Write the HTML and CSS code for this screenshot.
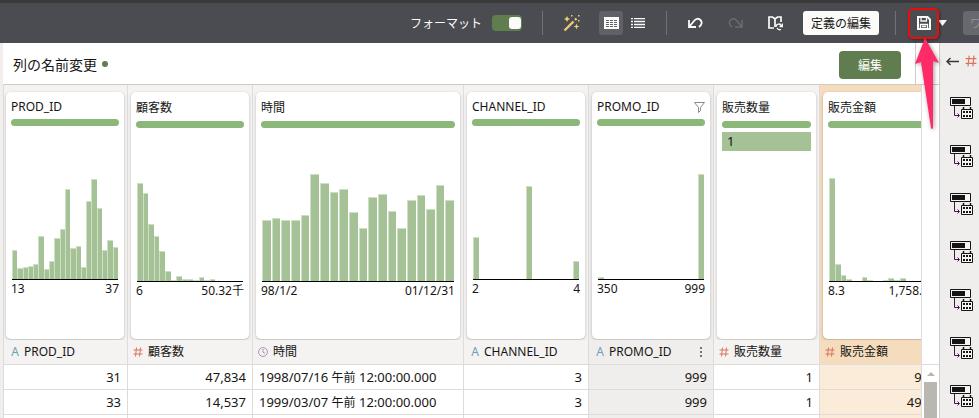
FILE: index.html
```html
<!DOCTYPE html>
<html lang="ja">
  <head>
    <meta charset="UTF-8" />
    <meta name="viewport" content="width=device-width, initial-scale=1.0" />
    <title>列の名前変更</title>
    <link rel="stylesheet" href="styles.css">
  </head>

  <body>
    <!-- shared icons -->
    <svg class="sprite" aria-hidden="true">
      <symbol id="hash" viewBox="0 0 10 10">
        <path d="M3.5 0.5L2.5 9.5M7.5 0.5L6.5 9.5M0.5 3H9.5M0.5 7H9.5" fill="none" stroke="currentColor" />
      </symbol>
      <symbol id="clock" viewBox="0 0 10 10">
        <circle cx="5" cy="5" r="4.4" fill="none" stroke="currentColor" />
        <path d="M5 2V5.2L7 6.4" fill="none" stroke="currentColor" />
      </symbol>
      <symbol id="step" viewBox="0 0 24 24">
        <path d="M0.5 0.5H20.5V8.5H0.5Z" fill="#f7f5f4" stroke="#161513" />
        <path d="M2 2H15V7H2Z" fill="#161513" />
        <path d="M4.5 9V18.5H9M7.5 16.5L9.5 18.5L7.5 20.5" fill="none" stroke="#4a1248" />
        <path d="M11.5 12.5H22.5V21.5H11.5Z" fill="#f7f5f4" stroke="#161513" />
        <path d="M13.5 10V13M20.5 10V13" stroke="#161513" stroke-width="1.5" />
        <path d="M13 14H15V16H13ZM16 14H18V16H16ZM19 14H21V16H19ZM13 18H15V20H13ZM16 18H18V20H16ZM19 18H21V20H19Z" fill="#161513" />
      </symbol>
    </svg>

    <header class="toolbar">
      <label class="format" for="format">フォーマット</label>
      <input type="checkbox" class="toggle" id="format" checked />
      <span class="divider"></span>
      <button class="tool wand" aria-label="自動">
        <svg width="17" height="17" viewBox="0 0 17 17">
          <path d="M1.5 15.5L10.5 6.5M12 5L13.5 3.5" stroke="#f0cc71" stroke-width="2.4" fill="none" />
          <path d="M4 1L5 3L7 4L5 5L4 7L3 5L1 4L3 3ZM13.5 8.5L14.3 10.7L16.5 11.5L14.3 12.3L13.5 14.5L12.7 12.3L10.5 11.5L12.7 10.7ZM8 0H9.5V1.5H8ZM15 0H16.5V1.5H15ZM15 5H16.5V6.5H15Z" fill="#f0cc71" />
        </svg>
      </button>
      <div class="views">
        <button class="tool valgt" aria-label="表">
          <svg width="15" height="12" viewBox="0 0 15 12">
            <path d="M0 0H15V12H0Z" fill="#fcfbfa" />
            <path d="M2 3.5H5M6 3.5H9M10 3.5H13M2 5.5H5M6 5.5H9M10 5.5H13M2 7.5H5M6 7.5H9M10 7.5H13M2 9.5H5M6 9.5H9M10 9.5H13" stroke="#5f6166" />
          </svg>
        </button>
        <button class="tool" aria-label="リスト">
          <svg width="14" height="10" viewBox="0 0 14 10">
            <path d="M0 0.5H2M3 0.5H14M0 3.5H2M3 3.5H14M0 6.5H2M3 6.5H14M0 9.5H2M3 9.5H14" stroke="#fcfbfa" stroke-width="1.6" />
          </svg>
        </button>
      </div>
      <span class="divider"></span>
      <button class="tool" aria-label="元に戻す">
        <svg width="15" height="12" viewBox="0 0 15 12">
          <path d="M1 3V10H8M1.5 9.5L6 4C8 1.5 10.5 1 12.5 3C14.5 5 14 7.5 11 10" fill="none" stroke="#fcfbfa" stroke-width="1.8" />
        </svg>
      </button>
      <button class="tool" aria-label="やり直し" disabled>
        <svg width="15" height="12" viewBox="0 0 15 12">
          <path d="M14 3V10H7M13.5 9.5L9 4C7 1.5 4.5 1 2.5 3C0.5 5 1 7.5 4 10" fill="none" stroke="#696b70" stroke-width="1.5" />
        </svg>
      </button>
      <button class="tool" aria-label="リフレッシュ">
        <svg width="15" height="15" viewBox="0 0 15 15">
          <path d="M6 12H1V1H4.5L7 3L9.5 1H13V6M7 3V11" fill="none" stroke="#fcfbfa" stroke-width="1.7" />
          <path d="M8 11C8 7.5 12.5 7 13.5 10M14.5 7.5V10.5H11.5M9 12C10 14 11.5 14 13 13.5" fill="none" stroke="#fcfbfa" stroke-width="1.3" />
        </svg>
      </button>
      <button class="define">定義の編集</button>
      <span class="divider"></span>
      <div class="save">
        <button class="tool" aria-label="保存">
          <svg width="14" height="14" viewBox="0 0 14 14">
            <path d="M1 1H10.5L13 3.5V13H1Z" fill="none" stroke="#fcfbfa" stroke-width="2" />
            <path d="M4 1V5H9.5V1M3.5 13V8.5H10.5V13M5 10.5H9" fill="none" stroke="#fcfbfa" stroke-width="1.3" />
          </svg>
        </button>
        <button class="more" aria-label="保存メニュー">
          <svg width="9" height="6" viewBox="0 0 9 6"><path d="M0 0H9L4.5 6Z" fill="#fcfbfa" /></svg>
        </button>
        <span class="frame"></span>
        <svg class="pointer" width="30" height="96" viewBox="0 0 30 96">
          <path d="M13 1L3 27L9 25L19 91Q20 93 21 91L21 24L27 26Z" fill="#ff2b68" />
        </svg>
      </div>
      <button class="workbook" disabled>ワークブックの作成</button>
    </header>

    <main>
      <div class="edge"></div>
      <section class="content">
        <div class="step_header">
          <h1>列の名前変更<span class="dot"></span></h1>
          <button class="edit">編集</button>
          <span class="step_end"></span>
        </div>
        <div class="sheet">
          <div class="clip">
            <table>
              <colgroup>
                <col class="col" /><col class="col" /><col class="col_time" /><col class="col" />
                <col class="col" /><col class="col_small" /><col class="col" />
              </colgroup>
              <thead>
                <tr class="cards">
                  <td>
                    <article class="card">
                      <h2>PROD_ID</h2>
                      <div class="quality"></div>
                      <div class="chart" data-values="29,11,12,13,15,43,10,18,41,50,90,31,33,12,78,100,71,29,39,32"></div>
                      <p class="axis"><span>13</span><span>37</span></p>
                    </article>
                  </td>
                  <td>
                    <article class="card">
                      <h2 class="ja">顧客数</h2>
                      <div class="quality"></div>
                      <div class="chart" data-values="98,88,57,45,30,10,1,5,2,2,1,4,1,2,0,0,0,0,0,0"></div>
                      <p class="axis"><span>6</span><span>50.32千</span></p>
                    </article>
                  </td>
                  <td>
                    <article class="card">
                      <h2 class="ja">時間</h2>
                      <div class="quality"></div>
                      <div class="chart spaced" data-values="61,63,61,61,66,107,98,89,92,69,53,84,87,70,53,81,86,72,96,81"></div>
                      <p class="axis"><span>98/1/2</span><span>01/12/31</span></p>
                    </article>
                  </td>
                  <td>
                    <article class="card">
                      <h2>CHANNEL_ID</h2>
                      <div class="quality"></div>
                      <div class="chart" data-values="42,0,0,0,0,0,0,0,0,0,93,0,0,0,0,0,0,0,0,18"></div>
                      <p class="axis"><span>2</span><span>4</span></p>
                    </article>
                  </td>
                  <td class="hover">
                    <article class="card">
                      <h2>PROMO_ID
                        <svg width="11" height="11" viewBox="0 0 11 11"><path d="M0.5 0.5H10.5L6.5 5.5V8.5L4.5 10.5V5.5Z" fill="none" stroke="#8a8a92" /></svg>
                      </h2>
                      <div class="quality"></div>
                      <div class="chart" data-values="2,0,0,0,0,0,0,0,0,0,0,0,0,0,0,0,0,0,0,105"></div>
                      <p class="axis"><span>350</span><span>999</span></p>
                    </article>
                  </td>
                  <td>
                    <article class="card">
                      <h2 class="ja">販売数量</h2>
                      <div class="quality"></div>
                      <p class="value">1</p>
                    </article>
                  </td>
                  <td class="selected">
                    <article class="card">
                      <h2 class="ja">販売金額</h2>
                      <div class="quality"></div>
                      <div class="chart" data-values="103,17,6,2,0,0,4,1,0,0,1,3,1,3,0,0,0,1,0,0"></div>
                      <p class="axis"><span>8.3</span><span>1,758.42</span></p>
                    </article>
                  </td>
                </tr>
                <tr>
                  <th><div class="name"><i class="text">A</i>PROD_ID</div></th>
                  <th><div class="name"><svg class="number"><use href="#hash" /></svg>顧客数</div></th>
                  <th><div class="name"><svg class="time"><use href="#clock" /></svg>時間</div></th>
                  <th><div class="name"><i class="text">A</i>CHANNEL_ID</div></th>
                  <th class="hover">
                    <div class="name"><i class="text">A</i>PROMO_ID
                      <button class="options" aria-label="オプション">
                        <svg width="2" height="10" viewBox="0 0 2 10"><path d="M0 0H2V2H0ZM0 4H2V6H0ZM0 8H2V10H0Z" fill="#77736f" /></svg>
                      </button>
                    </div>
                  </th>
                  <th><div class="name"><svg class="number"><use href="#hash" /></svg>販売数量</div></th>
                  <th class="selected"><div class="name"><svg class="number"><use href="#hash" /></svg>販売金額</div></th>
                </tr>
              </thead>
              <tbody>
                <tr>
                  <td>31</td>
                  <td>47,834</td>
                  <td class="date">1998/07/16 <span>午前</span> 12:00:00.000</td>
                  <td>3</td>
                  <td class="hover">999</td>
                  <td>1</td>
                  <td class="selected">9.86</td>
                </tr>
                <tr>
                  <td>33</td>
                  <td>14,537</td>
                  <td class="date">1999/03/07 <span>午前</span> 12:00:00.000</td>
                  <td>3</td>
                  <td class="hover">999</td>
                  <td>1</td>
                  <td class="selected">49.86</td>
                </tr>
                <tr>
                  <td></td><td></td><td></td><td></td><td class="hover"></td><td></td><td class="selected"></td>
                </tr>
              </tbody>
            </table>
          </div>
          <div class="scroll">
            <div class="scroll_top"></div>
            <svg width="8" height="4" viewBox="0 0 8 4"><path d="M0 4L4 0L8 4Z" fill="#bab6b1" /></svg>
            <div class="thumb"></div>
          </div>
        </div>
      </section>

      <aside class="rail">
        <div class="rail_header">
          <button aria-label="戻る">
            <svg width="13" height="9" viewBox="0 0 13 9"><path d="M13 4.5H1M4.5 1L1 4.5L4.5 8" fill="none" stroke="#3a3632" stroke-width="1.4" /></svg>
          </button>
          <svg class="rail_hash" width="12" height="12"><use href="#hash" /></svg>
        </div>
        <button class="step" aria-label="ステップ 1"><svg width="24" height="24"><use href="#step" /></svg></button>
        <button class="step" aria-label="ステップ 2"><svg width="24" height="24"><use href="#step" /></svg></button>
        <button class="step" aria-label="ステップ 3"><svg width="24" height="24"><use href="#step" /></svg></button>
        <button class="step" aria-label="ステップ 4"><svg width="24" height="24"><use href="#step" /></svg></button>
        <button class="step" aria-label="ステップ 5"><svg width="24" height="24"><use href="#step" /></svg></button>
        <button class="step" aria-label="ステップ 6"><svg width="24" height="24"><use href="#step" /></svg></button>
        <button class="step" aria-label="ステップ 7"><svg width="24" height="24"><use href="#step" /></svg></button>
      </aside>
    </main>

    <script>
      // one bar for each value in data-values
      document.querySelectorAll(".chart").forEach((chart) => {
        chart.dataset.values.split(",").forEach((value) => {
          const bar = document.createElement("span");
          if (value > 0) {
            bar.className = "bar";
            bar.style.height = value + "px";
          }
          chart.appendChild(bar);
        });
      });
    </script>
  </body>
</html>
```
FILE: styles.css
```css
* {
  box-sizing: border-box;
}

body {
  margin: 0;
  height: 100vh;
  display: flex;
  flex-direction: column;
  overflow: hidden;
  background: white;
  color: #161513;
  font-family: "Noto Sans", "Noto Sans CJK JP", sans-serif;
  font-size: 13px;
}

h1,
h2,
p {
  margin: 0;
  font-weight: 400;
}

button {
  font-family: inherit;
  font-size: 12px;
  color: inherit;
  border: none;
  background: none;
  padding: 0;
}

svg {
  display: block;
  flex: none;
}

.sprite {
  position: absolute;
  width: 0;
  height: 0;
}

/* toolbar */
.toolbar {
  display: flex;
  align-items: center;
  justify-content: flex-end;
  gap: 16px;
  height: 43px;
  flex: none;
  border-top: 3px solid #3a3a3a;
  background: #4a4c52;
}

.format {
  color: #fcfbfa;
  font-size: 12px;
  margin-right: -6px;
}

.toggle {
  appearance: none;
  display: flex;
  justify-content: flex-end;
  align-items: center;
  width: 30px;
  height: 16px;
  margin: 0 4px 0 0;
  padding: 0 1px;
  border-radius: 4px;
  background: #5f7d4f;
}

.toggle::before {
  content: "";
  width: 12px;
  height: 12px;
  border-radius: 3px;
  background: #fcfbfa;
}

.divider {
  width: 1px;
  height: 24px;
  background: #6f7176;
}

.tool {
  display: flex;
  align-items: center;
  justify-content: center;
  width: 24px;
  height: 24px;
  border-radius: 3px;
}

.valgt {
  background: #5f6166;
}

.views {
  display: flex;
  gap: 3px;
}

.define {
  width: 76px;
  height: 24px;
  border-radius: 3px;
  background: #fcfbfa;
}

.save {
  position: relative;
  display: flex;
  align-items: center;
  gap: 2px;
}

.frame {
  position: absolute;
  top: -3px;
  left: -4px;
  width: 31px;
  height: 31px;
  border: 2px solid #f00a0a;
  border-radius: 5px;
  box-shadow: 1px 1px 3px rgba(0, 0, 0, 0.4);
}

.pointer {
  position: absolute;
  z-index: 1;
  top: 26px;
  left: 0;
  filter: drop-shadow(1px 1px 2px rgba(0, 0, 0, 0.4));
}

.workbook {
  width: 16px;
  height: 24px;
  padding-left: 7px;
  overflow: hidden;
  text-align: left;
  white-space: nowrap;
  border-radius: 3px 0 0 3px;
  background: #68696e;
  color: #8f9095;
}

/* main area */
main {
  flex: 1;
  display: flex;
  min-height: 0;
}

.edge {
  width: 3px;
  background: #f1efed;
}

.content {
  flex: 1;
  min-width: 0;
  display: flex;
  flex-direction: column;
}

.step_header {
  display: flex;
  align-items: center;
  height: 42px;
  flex: none;
  padding-left: 10px;
  border-bottom: 1px solid #cfccc8;
}

.step_header h1 {
  flex: 1;
  display: flex;
  align-items: center;
  gap: 5px;
  font-size: 14px;
}

.dot {
  width: 6px;
  height: 6px;
  border-radius: 50%;
  background: #5f7d4f;
}

.edit {
  width: 62px;
  height: 28px;
  margin: 3px 14px 0 0;
  border-radius: 4px;
  background: #5f7d4f;
  color: white;
}

.step_end {
  width: 24px;
  align-self: stretch;
  border-left: 1px solid #cfccc8;
}

.sheet {
  flex: 1;
  display: flex;
  min-height: 0;
}

.clip {
  flex: 1;
  min-width: 0;
  overflow: hidden;
  border-right: 1px solid #dedcda;
}

table {
  width: 942px;
  table-layout: fixed;
  border-collapse: separate;
  border-spacing: 0;
}

.col {
  width: 125px;
}

.col_time {
  width: 211px;
}

.col_small {
  width: 106px;
}

th,
td {
  height: 25px;
  padding: 0 6px;
  border-right: 1px solid #dedcda;
  border-bottom: 1px solid #dedcda;
  font-weight: 400;
  line-height: 18px;
  text-align: right;
  white-space: nowrap;
}

th {
  padding: 0 5px;
}

th:first-child,
td:first-child {
  border-left: 1px solid #dedcda;
}

thead th,
thead td {
  background: #f4f3f2;
}

.cards td {
  height: 255px;
  padding: 7px 3px 0;
  border-bottom: none;
  vertical-align: top;
}

.cards td:first-child {
  padding-left: 2px;
}

thead .hover,
.hover {
  background: #efeeec;
}

tbody .selected {
  padding-right: 4px;
  background: #fbecd9;
}

thead .selected {
  background: #f4dcbc;
}

.card {
  height: 247px;
  padding: 6px 5px;
  border-radius: 5px;
  background: white;
  box-shadow: 0 1px 3px rgba(0, 0, 0, 0.25);
  text-align: left;
}

.card h2 {
  display: flex;
  align-items: center;
  justify-content: space-between;
  font-size: 12px;
  line-height: 18px;
  margin-bottom: 3px;
}

.card .ja {
  line-height: 20px;
}

.quality {
  height: 7px;
  border-radius: 4px;
  background: #8bb779;
}

.chart {
  display: flex;
  align-items: flex-end;
  height: 154px;
  margin: 0 1px;
  border-bottom: 1px solid black;
}

.chart span {
  flex: 1;
}

.chart .bar {
  background: #a5c196;
  border: solid #cfdfc6;
  border-width: 1px 0 0 1px;
}

.spaced {
  gap: 1px;
}

.axis {
  display: flex;
  justify-content: space-between;
  font-size: 12px;
  line-height: 18px;
}

.value {
  height: 19px;
  margin-top: 4px;
  padding-left: 5px;
  line-height: 19px;
  background: #a5c196;
}

.name {
  display: flex;
  align-items: center;
  font-size: 12px;
}

.name i,
.name > svg {
  width: 10px;
  height: 10px;
  margin-right: 5px;
}

.name i {
  height: 18px;
  font-style: normal;
}

.text {
  color: #6f9fb5;
}

.number {
  color: #db7360;
}

.time {
  color: #a893b5;
}

.options {
  margin-left: auto;
  padding: 0 6px;
}

.date {
  text-align: left;
}

.date span {
  font-size: 12px;
}

.scroll {
  width: 17px;
  display: flex;
  flex-direction: column;
  align-items: center;
}

.scroll_top {
  width: 100%;
  height: 280px;
  flex: none;
  margin-bottom: 7px;
  border-bottom: 1px solid #dedcda;
}

.thumb {
  flex: 1;
  width: 13px;
  margin-top: 6px;
  background: #bab6b1;
}

.rail {
  width: 40px;
  display: flex;
  flex-direction: column;
  flex: none;
  padding-left: 6px;
  border-left: 1px solid #cfccc8;
  background: #f0eeed;
}

.rail_header {
  display: flex;
  align-items: center;
  gap: 6px;
  height: 36px;
  flex: none;
  margin-bottom: 6px;
}

.rail_hash {
  color: #db7360;
}

.step {
  height: 48px;
  flex: none;
  padding: 0 4px;
}
```
